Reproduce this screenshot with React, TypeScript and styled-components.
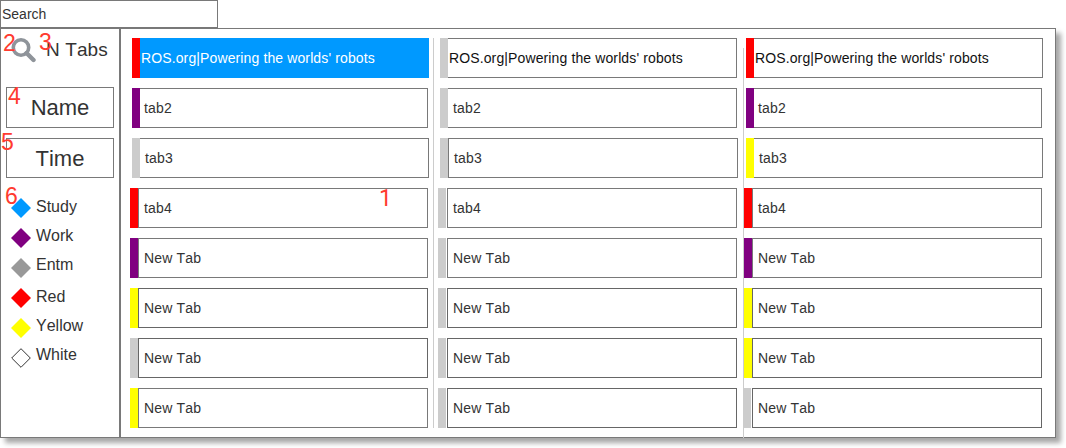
import React from "react";
import styled, { createGlobalStyle } from "styled-components";

const GlobalStyle = createGlobalStyle`
  *, *::before, *::after { box-sizing: border-box; }
  body {
    margin: 0;
    background: #fff;
    color: #333;
    font-family: "Liberation Sans", Arial, sans-serif;
    font-kerning: none;
    overflow: hidden;
  }
`;

const LINE = "#797979";
const DARK_LINE = "#666";
const RED = "#ff0000";
const PURPLE = "#800080";
const YELLOW = "#ffff00";
const BLUE = "#0099ff";
const SILVER = "#cccccc";

const Page = styled.div`
  position: relative;
  width: 1066px;
  height: 448px;
  overflow: hidden;
`;

const SearchBox = styled.div`
  width: 218px;
  height: 28px;
  border: 1px solid ${LINE};
  padding-left: 1px;
  font-size: 14px;
  line-height: 26px;
`;

const Panel = styled.div`
  display: flex;
  width: 1056px;
  height: 410px;
  background: #fff;
  box-shadow: 5px 5px 5px rgba(0, 0, 0, 0.35);
`;

const Sidebar = styled.aside`
  width: 120px;
  border: 1px solid ${LINE};
  padding: 8px 5px 0;
`;

const Summary = styled.div`
  display: flex;
  height: 50px;
  padding-left: 4px;
`;

const TabCount = styled.span`
  margin-left: 10px;
  font-size: 19px;
  line-height: 25px;
  letter-spacing: 0.1px;
  white-space: nowrap;
`;

const SortButton = styled.div<{ $height: number }>`
  height: ${(p) => p.$height}px;
  margin-bottom: 10px;
  border: 1px solid ${LINE};
  font-size: 22px;
  line-height: ${(p) => p.$height - 1}px;
  text-align: center;
`;

const Legend = styled.ul`
  list-style: none;
  margin: 0;
  padding: 5px 0 0 4px;
`;

const LegendItem = styled.li`
  display: flex;
  height: 30px;
  align-items: flex-start;
  svg { margin-top: 5px; flex: none; }
`;

const LegendLabel = styled.span<{ $top: number }>`
  margin: ${(p) => p.$top}px 0 0 4px;
  font-size: 16px;
  line-height: 20px;
`;

const Board = styled.main`
  display: flex;
  width: 936px;
  border: 1px solid ${LINE};
`;

const Column = styled.section<{ $inset: number; $width: number }>`
  display: flex;
  flex-direction: column;
  gap: 10px;
  width: ${(p) => p.$width}px;
  padding: 9px 0 0 ${(p) => p.$inset}px;
`;

const Divider = styled.div<{ $top: number; $height: number }>`
  width: 1px;
  height: ${(p) => p.$height}px;
  margin-top: ${(p) => p.$top}px;
  margin-bottom: -1px;
  background: ${SILVER};
`;

const Row = styled.div<{ $shift: number; $color: string; $marker: number; $gap: number }>`
  display: flex;
  height: 40px;
  margin-left: ${(p) => p.$shift}px;
  &::before {
    content: "";
    width: ${(p) => p.$marker}px;
    margin-right: ${(p) => p.$gap}px;
    background: ${(p) => p.$color};
  }
`;

const Cell = styled.div<{
  $width: number; $open: boolean; $pad: number; $line: string; $active: boolean; $ink: string; $tracking: number;
}>`
  width: ${(p) => p.$width}px;
  border: 1px solid ${(p) => (p.$active ? BLUE : p.$line)};
  border-left-width: ${(p) => (p.$open ? 0 : 1)}px;
  padding-left: ${(p) => p.$pad}px;
  background: ${(p) => (p.$active ? BLUE : "#fff")};
  color: ${(p) => p.$ink};
  font-size: 14px;
  line-height: 38px;
  letter-spacing: ${(p) => p.$tracking}px;
  white-space: nowrap;
`;

const Note = styled.span<{ $x: number; $y: number }>`
  position: absolute;
  left: ${(p) => p.$x}px;
  top: ${(p) => p.$y}px;
  color: #ff3b30;
  font-family: "Liberation Sans", Arial, sans-serif;
  font-size: 23px;
  line-height: 24px;
`;

const SlimNote = styled(Note)`
  font-family: Roboto, sans-serif;
`;

type Tab = {
  title: string; color: string; shift: number; width: number; pad: number;
  open?: boolean; gap?: number; marker?: number; line?: string; active?: boolean; ink?: string;
};

const HOME = "ROS.org|Powering the worlds' robots";

const first: Tab[] = [
  { title: HOME, color: RED, shift: 2, width: 289, pad: 1, open: true, active: true, ink: "#fff" },
  { title: "tab2", color: PURPLE, shift: 2, width: 288, pad: 4, open: true },
  { title: "tab3", color: SILVER, shift: 2, width: 289, pad: 5, open: true },
  { title: "tab4", color: RED, shift: 0, width: 290, pad: 5 },
  { title: "New Tab", color: PURPLE, shift: 0, width: 290, pad: 5 },
  { title: "New Tab", color: YELLOW, shift: 0, width: 290, pad: 5, line: DARK_LINE },
  { title: "New Tab", color: SILVER, shift: 0, width: 290, pad: 5, line: DARK_LINE },
  { title: "New Tab", color: YELLOW, shift: 0, width: 290, pad: 5 },
];

const second: Tab[] = [
  { title: HOME, color: SILVER, shift: 2, width: 289, pad: 1, open: true, ink: "#111" },
  { title: "tab2", color: SILVER, shift: 2, width: 289, pad: 5, open: true },
  { title: "tab3", color: SILVER, shift: 2, width: 290, pad: 5 },
  { title: "tab4", color: SILVER, shift: 0, width: 290, pad: 5, gap: 1 },
  { title: "New Tab", color: SILVER, shift: 0, width: 290, pad: 5, gap: 1 },
  { title: "New Tab", color: SILVER, shift: 0, width: 290, pad: 5, gap: 1, line: DARK_LINE },
  { title: "New Tab", color: SILVER, shift: 0, width: 290, pad: 5, gap: 1, line: DARK_LINE },
  { title: "New Tab", color: SILVER, shift: 0, width: 290, pad: 5, gap: 1, line: DARK_LINE },
];

const third: Tab[] = [
  { title: HOME, color: RED, shift: 2, width: 289, pad: 1, open: true, ink: "#111" },
  { title: "tab2", color: PURPLE, shift: 2, width: 288, pad: 4, open: true },
  { title: "tab3", color: YELLOW, shift: 2, width: 289, pad: 5, open: true },
  { title: "tab4", color: RED, shift: 0, width: 290, pad: 5 },
  { title: "New Tab", color: PURPLE, shift: 0, width: 290, pad: 5 },
  { title: "New Tab", color: YELLOW, shift: 0, width: 290, pad: 5, line: DARK_LINE },
  { title: "New Tab", color: YELLOW, shift: 0, width: 290, pad: 5, line: DARK_LINE },
  { title: "New Tab", color: SILVER, shift: 0, width: 290, pad: 5, marker: 7, gap: 1, line: DARK_LINE },
];

const legend = [
  { name: "Study", fill: BLUE, top: 4 },
  { name: "Work", fill: PURPLE, top: 3 },
  { name: "Entm", fill: "#999999", top: 2 },
  { name: "Red", fill: RED, top: 4 },
  { name: "Yellow", fill: YELLOW, top: 3 },
  { name: "White", fill: "#fff", stroke: "#333", top: 2 },
];

const notes = [
  { n: 2, x: 3, y: 31 },
  { n: 3, x: 39, y: 30 },
  { n: 4, x: 8, y: 84 },
  { n: 5, x: 1, y: 130 },
  { n: 6, x: 5, y: 184 },
];

function TabColumn({ tabs, inset, width }: { tabs: Tab[]; inset: number; width: number }) {
  return (
    <Column $inset={inset} $width={width}>
      {tabs.map((t, i) => (
        <Row key={i} $shift={t.shift} $color={t.color} $marker={t.marker ?? 8} $gap={t.gap ?? 0}>
          <Cell
            $width={t.width}
            $open={!!t.open}
            $pad={t.pad}
            $line={t.line ?? LINE}
            $active={!!t.active}
            $ink={t.ink ?? "#333"}
            $tracking={t.title === HOME ? 0.12 : 0.17}
          >
            {t.title}
          </Cell>
        </Row>
      ))}
    </Column>
  );
}

export default function App() {
  return (
    <Page>
      <GlobalStyle />
      <SearchBox>Search</SearchBox>
      <Panel>
        <Sidebar>
          <Summary>
            <svg width="26" height="26" viewBox="0 0 26 26" fill="none" stroke="#8f949a">
              <circle cx="11" cy="10.5" r="7.7" strokeWidth="3.6" />
              <path d="M16.5 16 L23.5 23" strokeWidth="4.4" strokeLinecap="round" />
            </svg>
            <TabCount>N Tabs</TabCount>
          </Summary>
          <SortButton $height={41}>Name</SortButton>
          <SortButton $height={40}>Time</SortButton>
          <Legend>
            {legend.map((l) => (
              <LegendItem key={l.name}>
                <svg width="22" height="20" viewBox="0 0 22 20">
                  {l.stroke ? (
                    <path d="M11 0.7 L20.3 10 L11 19.3 L1.7 10 Z" fill={l.fill} stroke={l.stroke} />
                  ) : (
                    <path d="M11 0 L21 10 L11 20 L1 10 Z" fill={l.fill} />
                  )}
                </svg>
                <LegendLabel $top={l.top}>{l.name}</LegendLabel>
              </LegendItem>
            ))}
          </Legend>
        </Sidebar>
        <Board>
          <TabColumn tabs={first} inset={9} width={312} />
          <Divider $top={9} $height={390} />
          <TabColumn tabs={second} inset={4} width={309} />
          <Divider $top={19} $height={390} />
          <TabColumn tabs={third} inset={0} width={311} />
        </Board>
      </Panel>
      {notes.map((m) => (
        <Note key={m.n} $x={m.x} $y={m.y}>{m.n}</Note>
      ))}
      <SlimNote $x={379} $y={187}>1</SlimNote>
    </Page>
  );
}
